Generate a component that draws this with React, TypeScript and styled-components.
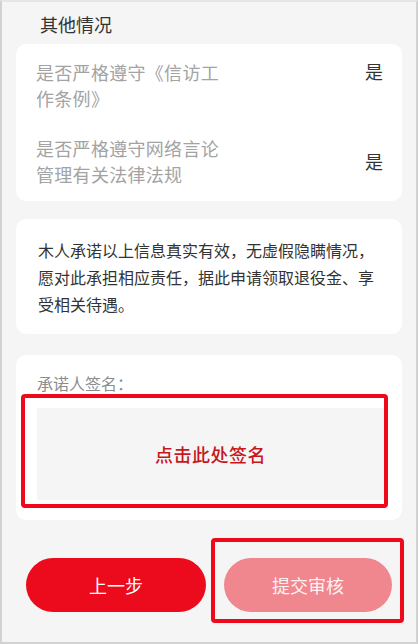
import { createGlobalStyle, styled } from "styled-components";

const GlobalStyle = createGlobalStyle`
  html, body {
    margin: 0;
    padding: 0;
    background: #f5f5f5;
  }
  * {
    box-sizing: border-box;
  }
  body {
    font-family: "Noto Sans CJK SC", "Noto Sans", sans-serif;
  }
`;

const rows = [
  { label: "是否严格遵守《信访工作条例》", value: "是", align: "flex-start" },
  { label: "是否严格遵守网络言论管理有关法律法规", value: "是", align: "center" },
];

const App = () => {
  return (
    <Frame>
      <GlobalStyle />
      <Title>其他情况</Title>
      <Card $pad="15px 19px 14px 20px">
        <RowList>
          {rows.map((row) => (
            <Row key={row.label} $align={row.align}>
              <RowLabel>{row.label}</RowLabel>
              <RowValue>{row.value}</RowValue>
            </Row>
          ))}
        </RowList>
      </Card>
      <Card $pad="18px 22px 16px 22px" $gap="18px">
        <Pledge>
          木人承诺以上信息真实有效，无虚假隐瞒情况，愿对此承担相应责任，据此申请领取退役金、享受相关待遇。
        </Pledge>
      </Card>
      <Card $pad="17px 18px 20px 21px" $gap="21px">
        <SignLabel>承诺人签名：</SignLabel>
        <SignArea>
          <SignText>点击此处签名</SignText>
          <Highlight $inset="-14px -4px -8px -16px" />
        </SignArea>
      </Card>
      <Actions>
        <PillButton $bg="#ec0b1c">上一步</PillButton>
        <HighlightWrap>
          <PillButton $bg="#f0868e" $fg="#fdf2f3">
            提交审核
          </PillButton>
          <Highlight $inset="-20px -12px -11px -13px" />
        </HighlightWrap>
      </Actions>
    </Frame>
  );
};

export default App;

const Frame = styled.div`
  width: 418px;
  height: 644px;
  overflow: hidden;
  background: #f5f5f5;
  border: 2px solid #d2d2d2;
  border-top-color: #e6e6e6;
  padding: 0 14px;
  display: flex;
  flex-direction: column;
`;

const Title = styled.div`
  height: 42px;
  display: flex;
  align-items: center;
  padding-left: 24px;
  padding-top: 2px;
  font-size: 18px;
  color: #333333;
`;

const Card = styled.div<{ $pad: string; $gap?: string }>`
  background: #ffffff;
  border-radius: 10px;
  padding: ${(p) => p.$pad};
  margin-top: ${(p) => p.$gap || "0"};
  display: flex;
  flex-direction: column;
`;

const RowList = styled.div`
  display: flex;
  flex-direction: column;
  gap: 24px;
`;

const Row = styled.div<{ $align: string }>`
  display: flex;
  justify-content: space-between;
  align-items: ${(p) => p.$align};
`;

const RowLabel = styled.div`
  max-width: 192px;
  font-size: 18px;
  line-height: 26px;
  letter-spacing: 0.3px;
  color: #a3a3a3;
`;

const RowValue = styled.div`
  font-size: 18px;
  line-height: 24px;
  color: #333333;
`;

const Pledge = styled.p`
  margin: 0;
  font-size: 16px;
  line-height: 27px;
  color: #333333;
`;

const SignLabel = styled.div`
  font-size: 16px;
  line-height: 22px;
  color: #8c8c8c;
`;

const SignArea = styled.div`
  position: relative;
  margin-top: 14px;
  height: 92px;
  background: #f5f5f5;
  display: flex;
  align-items: center;
  justify-content: center;
`;

const SignText = styled.span`
  font-size: 18px;
  font-weight: 500;
  color: #c8161d;
  letter-spacing: 0.5px;
`;

const Highlight = styled.div<{ $inset: string }>`
  position: absolute;
  inset: ${(p) => p.$inset};
  border: 4px solid #ee0a1a;
  border-radius: 4px;
  pointer-events: none;
`;

const Actions = styled.div`
  margin-top: 38px;
  padding: 0 10px;
  display: flex;
  gap: 18px;
`;

const HighlightWrap = styled.div`
  position: relative;
  flex: 1;
  display: flex;
`;

const PillButton = styled.button<{ $bg: string; $fg?: string }>`
  flex: 1;
  height: 54px;
  border: none;
  border-radius: 27px;
  background: ${(p) => p.$bg};
  color: ${(p) => p.$fg || "#ffffff"};
  font-family: "Noto Sans CJK SC", "Noto Sans", sans-serif;
  font-size: 18px;
  cursor: pointer;
`;
